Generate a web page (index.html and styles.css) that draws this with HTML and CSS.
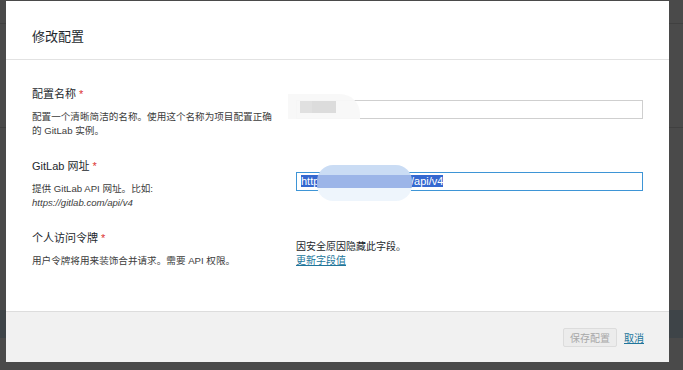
FILE: index.html
```html
<!DOCTYPE html>
<html lang="zh-CN">
  <head>
    <meta charset="UTF-8" />
    <meta name="viewport" content="width=device-width, initial-scale=1.0" />
    <title>修改配置</title>
    <link rel="stylesheet" href="styles.css">
  </head>
  <body>
    <div class="backdrop">
      <div class="modal">
        <div class="modal-header">
          <h1>修改配置</h1>
        </div>

        <div class="modal-body">
          <div class="field">
            <div class="field-info">
              <label>配置名称 <span class="req">*</span></label>
              <p>配置一个清晰简洁的名称。使用这个名称为项目配置正确的 GitLab 实例。</p>
            </div>
            <div class="field-control">
              <div class="input"></div>
              <div class="mask mask-gray"><span></span><span></span></div>
            </div>
          </div>

          <div class="field">
            <div class="field-info">
              <label>GitLab 网址 <span class="req">*</span></label>
              <p>提供 GitLab API 网址。比如:<br><em>https://gitlab.com/api/v4</em></p>
            </div>
            <div class="field-control">
              <div class="input focused"><span class="selected">http&nbsp;&nbsp;&nbsp;&nbsp;&nbsp;&nbsp;&nbsp;&nbsp;&nbsp;&nbsp;&nbsp;&nbsp;&nbsp;&nbsp;&nbsp;&nbsp;&nbsp;&nbsp;&nbsp;&nbsp;&nbsp;&nbsp;&nbsp;&nbsp;&nbsp;&nbsp;&nbsp;&nbsp;&nbsp;&nbsp;/api/v4</span></div>
              <div class="mask mask-blue"></div>
            </div>
          </div>

          <div class="field">
            <div class="field-info">
              <label>个人访问令牌 <span class="req">*</span></label>
              <p>用户令牌将用来装饰合并请求。需要 API 权限。</p>
            </div>
            <div class="field-control top">
              <p class="hidden-note">因安全原因隐藏此字段。<br><a href="#">更新字段值</a></p>
            </div>
          </div>
        </div>

        <div class="modal-footer">
          <button class="btn-save" disabled>保存配置</button>
          <a href="#" class="cancel">取消</a>
        </div>
      </div>
    </div>
  </body>
</html>
```

FILE: styles.css
```css
body {
  margin: 0;
  font-family: "Liberation Sans", "Noto Sans CJK SC", sans-serif;
  background: #4a4a4a;
}

.backdrop {
  height: 370px;
  padding: 1px 0 0 6px;
  box-sizing: border-box;
  background:
    linear-gradient(#404040, #404040) 0 23px / 100% 1px no-repeat,
    linear-gradient(#404040, #404040) 0 127px / 100% 1px no-repeat,
    linear-gradient(#3e4448, #3e4448) 0 310px / 100% 28px no-repeat,
    #4a4a4a;
}

.modal {
  width: 663px;
  height: 361px;
  background: white;
  display: flex;
  flex-direction: column;
}

.modal-header {
  height: 59px;
  border-bottom: 1px solid #e2e2e2;
  padding: 10px 26px 0;
  box-sizing: border-box;
  display: flex;
  align-items: center;
}

.modal-header h1 {
  margin: 0;
  font-size: 13px;
  font-weight: normal;
  color: #23282d;
}

.modal-body {
  flex: 1;
  padding: 26px 26px 0 26px;
}

.field {
  display: grid;
  grid-template-columns: 248px 1fr;
  column-gap: 16px;
  align-items: center;
  margin-bottom: 20px;
}

.field-info label {
  display: block;
  font-size: 11px;
  line-height: 16px;
  color: #23282d;
  margin-bottom: 8px;
}

.req {
  color: #dc3232;
}

.field-info p {
  margin: 0;
  max-width: 240px;
  font-size: 9.6px;
  line-height: 14px;
  color: #3c3c3c;
}

.field-control {
  position: relative;
  margin-bottom: 5px;
}

.field-control.top {
  align-self: start;
  margin: 10px 0 0;
}

.input {
  height: 19px;
  box-sizing: border-box;
  border: 1px solid #cfcfcf;
  padding: 2px 4px;
  font-size: 11px;
  line-height: 13px;
}

.input.focused {
  border-color: #3e95d6;
}

.selected {
  background: #3468d0;
  color: white;
}

.mask {
  position: absolute;
}

.mask-gray {
  left: -8px;
  top: -6px;
  width: 72px;
  height: 25px;
  border-radius: 0 20px 0 0;
  background: rgba(248, 248, 248, 0.95);
  display: flex;
  align-items: flex-end;
  padding: 0 0 6px 12px;
  box-sizing: border-box;
}

.mask-gray span {
  width: 12px;
  height: 12px;
  background: #e0e0e0;
}

.mask-gray span + span {
  width: 24px;
  background: #dcdcdc;
}

.mask-blue {
  left: 21px;
  top: -7px;
  width: 95px;
  height: 36px;
  border-radius: 16px;
  background: linear-gradient(#cadcf4 0 27%, #9cb5e8 27% 65%, #eef5fc 65%);
}

.hidden-note {
  margin: 0;
  font-size: 10px;
  line-height: 14px;
  color: #23282d;
}

.hidden-note a {
  color: #21759b;
}

.modal-footer {
  height: 50px;
  border-top: 1px solid #dddddd;
  background: #f1f1f1;
  display: flex;
  justify-content: flex-end;
  align-items: center;
  gap: 7px;
  padding: 0 25px 0 0;
}

.btn-save {
  height: 19px;
  padding: 0 6px;
  font-family: inherit;
  font-size: 10px;
  color: #a8a8a8;
  background: #ececec;
  border: 1px solid #dcdcdc;
  border-radius: 2px;
}

.cancel {
  font-size: 10px;
  color: #21759b;
}
```
